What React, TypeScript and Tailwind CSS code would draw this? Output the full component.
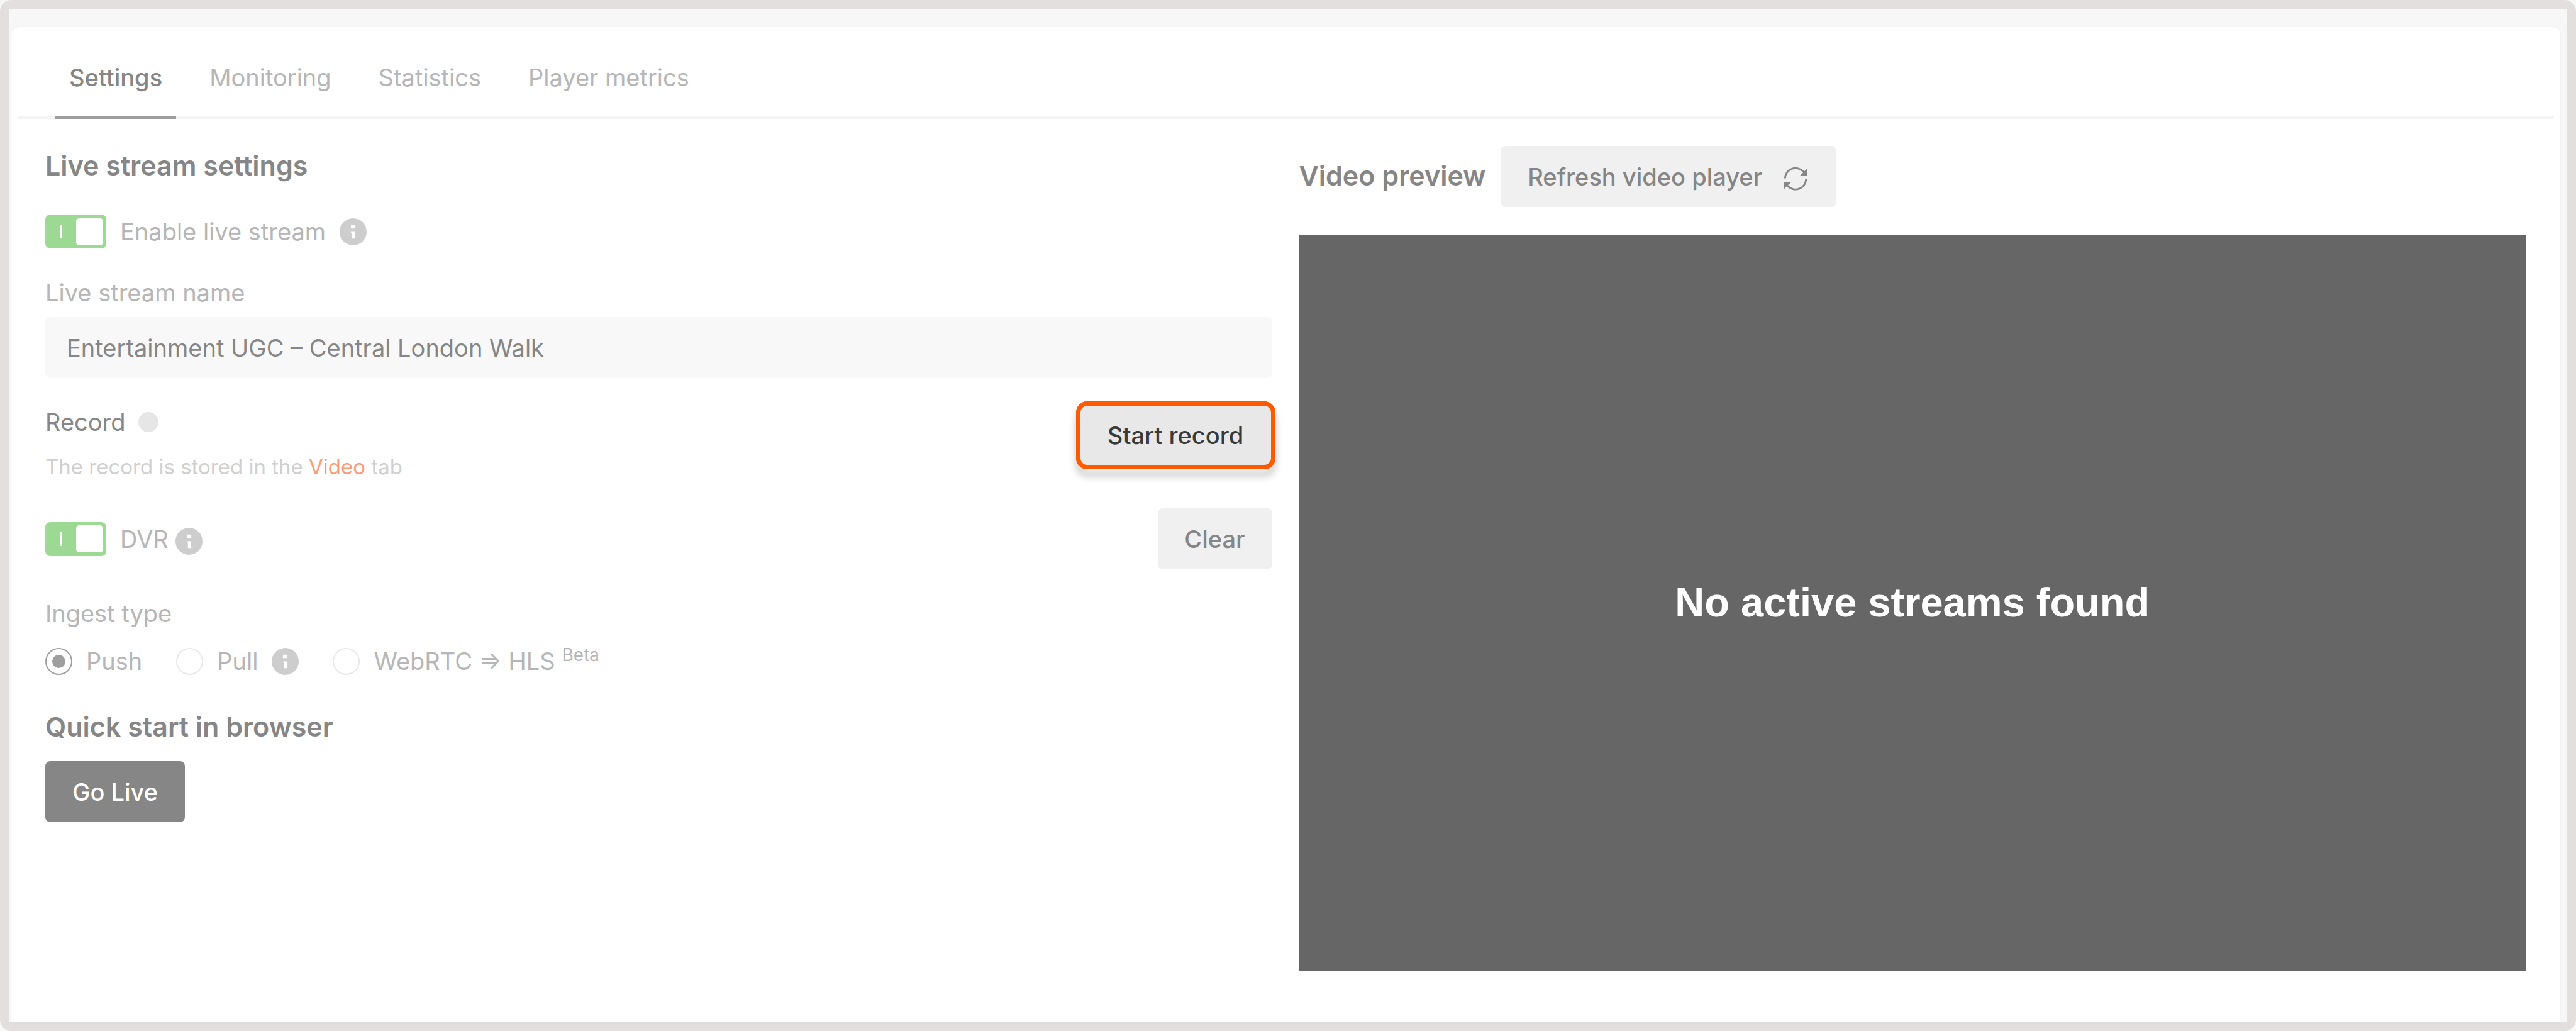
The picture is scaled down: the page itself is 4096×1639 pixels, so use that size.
import React from "react";

const tabs = ["Settings", "Monitoring", "Statistics", "Player metrics"];

const InfoIcon = () => {
  return (
    <svg
      viewBox="0 0 48 48"
      className="inline-block size-[43px] shrink-0 align-middle"
      aria-hidden="true"
    >
      <circle cx="24" cy="24" r="24" fill="#cdcdcd" />
      <path d="M20 12h8v6h-8zM20 24h8v12h-6v-10h-2z" fill="#fff" />
    </svg>
  );
};

const RefreshIcon = () => {
  return (
    <svg
      viewBox="0 0 42 42"
      className="ml-[34px] inline-block size-[38px] align-middle"
      aria-hidden="true"
    >
      <g fill="none" stroke="#868686" strokeWidth="3.2">
        <path d="M2.5 20.500A18.500 18.500 0 0 1 35 9" />
        <path d="M39.500 21.500A18.500 18.500 0 0 1 7 33.500" />
      </g>
      <path d="M42 2.500V16.500H28zM0 40V26.500H14z" fill="#868686" />
    </svg>
  );
};

type ToggleProps = { id: string };

const Toggle = ({ id }: ToggleProps) => {
  return (
    <input
      id={id}
      type="checkbox"
      defaultChecked
      className="flex h-[54px] w-[97px] shrink-0 appearance-none items-center rounded-[8px] bg-[#9cd993] pr-[5px] pl-[24px] before:h-[22px] before:w-[3px] before:bg-white after:ml-auto after:size-[43px] after:rounded-[5px] after:bg-white"
    />
  );
};

type RadioProps = { id: string; checked?: boolean };

const Radio = ({ id, checked }: RadioProps) => {
  return (
    <input
      id={id}
      type="radio"
      name="ingest"
      defaultChecked={checked}
      className="grid size-[43px] shrink-0 appearance-none place-items-center rounded-full border-2 border-[#e8e8e8] checked:border-[#9e9e9e] checked:before:size-[21px] checked:before:rounded-full checked:before:bg-[#9e9e9e]"
    />
  );
};

const Tabs = () => {
  return (
    <div
      role="tablist"
      className="mr-[10px] ml-[11px] flex gap-[31px] border-b-4 border-[#f4f4f4] pl-[59px]"
    >
      {tabs.map((tab, i) => (
        <button
          key={tab}
          role="tab"
          aria-selected={i === 0}
          className={
            i === 0
              ? "-mb-1 border-b-[5px] border-[#9e9e9e] px-[22px] pt-[52px] pb-[33px] font-medium text-[#868686]"
              : "-mb-1 border-b-[5px] border-transparent px-[22px] pt-[52px] pb-[33px] text-[#b6b6b6]"
          }
        >
          {tab}
        </button>
      ))}
    </div>
  );
};

const StreamSettings = () => {
  return (
    <section className="flex flex-col items-stretch pt-[3px]">
      <h2 className="text-[43px] leading-[56px] font-semibold text-[#868686]">
        Live stream settings
      </h2>

      <div className="mt-[50px] flex items-center gap-[22px] leading-[54px]">
        <Toggle id="enable" />
        <label htmlFor="enable">Enable live stream</label>
        <InfoIcon />
      </div>

      <label htmlFor="name" className="mt-[48px] leading-[44px]">
        Live stream name
      </label>
      <input
        id="name"
        type="text"
        defaultValue="Entertainment UGC – Central London Walk"
        className="mt-[17px] h-[97px] w-full rounded-[8px] bg-[#f8f8f8] px-[34px] text-[#868686]"
      />

      <div className="mt-[37px] flex items-start justify-between">
        <div className="pt-[11px]">
          <div className="flex items-center gap-[20px] leading-[44px] text-[#868686]">
            Record
            <span className="size-[32px] rounded-full bg-[#e6e6e6]" />
          </div>
          <p className="mt-[27px] text-[33px] leading-[44px] text-[#cfcfcf]">
            The record is stored in the{" "}
            <a href="#video" className="text-[#ff9a73]">
              Video
            </a>{" "}
            tab
          </p>
        </div>
        <div className="relative isolate -mr-[5px]">
          <span className="absolute inset-0 -z-10 rounded-[18px] border-[7px] border-[#ff5a00] drop-shadow-[0_11px_6px_rgba(0,0,0,0.25)]" />
          <button className="h-[108px] w-[317px] rounded-[18px] border-[7px] border-[#ff5a00] bg-[#e8e8e8] font-medium text-[#3a3a3a]">
            Start record
          </button>
        </div>
      </div>

      <div className="mt-[44px] flex items-center gap-[22px]">
        <Toggle id="dvr" />
        <label htmlFor="dvr">
          DVR <InfoIcon />
        </label>
        <button className="ml-auto h-[97px] w-[182px] rounded-[8px] bg-[#f0f0f0] font-medium text-[#868686]">
          Clear
        </button>
      </div>

      <fieldset>
        <legend className="pt-[48px] leading-[44px]">Ingest type</legend>
        <div className="mt-[32px] flex items-center gap-[54px] leading-[44px]">
          <div className="flex items-center gap-[22px]">
            <Radio id="push" checked />
            <label htmlFor="push">Push</label>
          </div>
          <div className="flex items-center gap-[22px]">
            <Radio id="pull" />
            <label htmlFor="pull">Pull</label>
            <InfoIcon />
          </div>
          <div className="flex items-center gap-[22px]">
            <Radio id="webrtc" />
            <label htmlFor="webrtc">
              WebRTC ⇒ HLS <sup className="-top-[14px] text-[28px]">Beta</sup>
            </label>
          </div>
        </div>
      </fieldset>

      <h2 className="mt-[54px] text-[43px] leading-[56px] font-semibold text-[#868686]">
        Quick start in browser
      </h2>
      <button className="mt-[27px] h-[97px] w-[222px] rounded-[8px] bg-[#868686] font-medium text-white">
        Go Live
      </button>
    </section>
  );
};

const VideoPreview = () => {
  return (
    <section>
      <div className="flex items-baseline gap-[24px]">
        <h2 className="text-[43px] leading-[56px] font-semibold text-[#868686]">
          Video preview
        </h2>
        <button className="h-[97px] rounded-[8px] bg-[#f0f0f0] pr-[46px] pl-[43px] font-medium text-[#868686]">
          Refresh video player
          <RefreshIcon />
        </button>
      </div>
      <div className="mt-[44px] flex aspect-[5/3] items-center justify-center bg-[#666]">
        <p className="font-['Liberation_Sans',Arial,sans-serif] text-[65px] font-bold text-white">
          No active streams found
        </p>
      </div>
    </section>
  );
};

const App = () => {
  return (
    <div className="bg-[#f8f8f8] font-[Inter,sans-serif] text-[38px] leading-[56px] text-[#b6b6b6]">
      <div className="flex min-h-screen flex-col rounded-[18px] border-14 border-[#e3dfde] bg-[#f7f7f7] pt-[29px] pr-[11px] pl-1">
        <main className="flex-1 rounded-t-[13px] bg-white shadow-[0_0_4px_rgba(0,0,0,0.03)]">
          <Tabs />
          <div className="grid grid-cols-2 gap-[43px] pt-[43px] pr-[55px] pb-[43px] pl-[54px]">
            <StreamSettings />
            <VideoPreview />
          </div>
        </main>
      </div>
    </div>
  );
};

export default App;
